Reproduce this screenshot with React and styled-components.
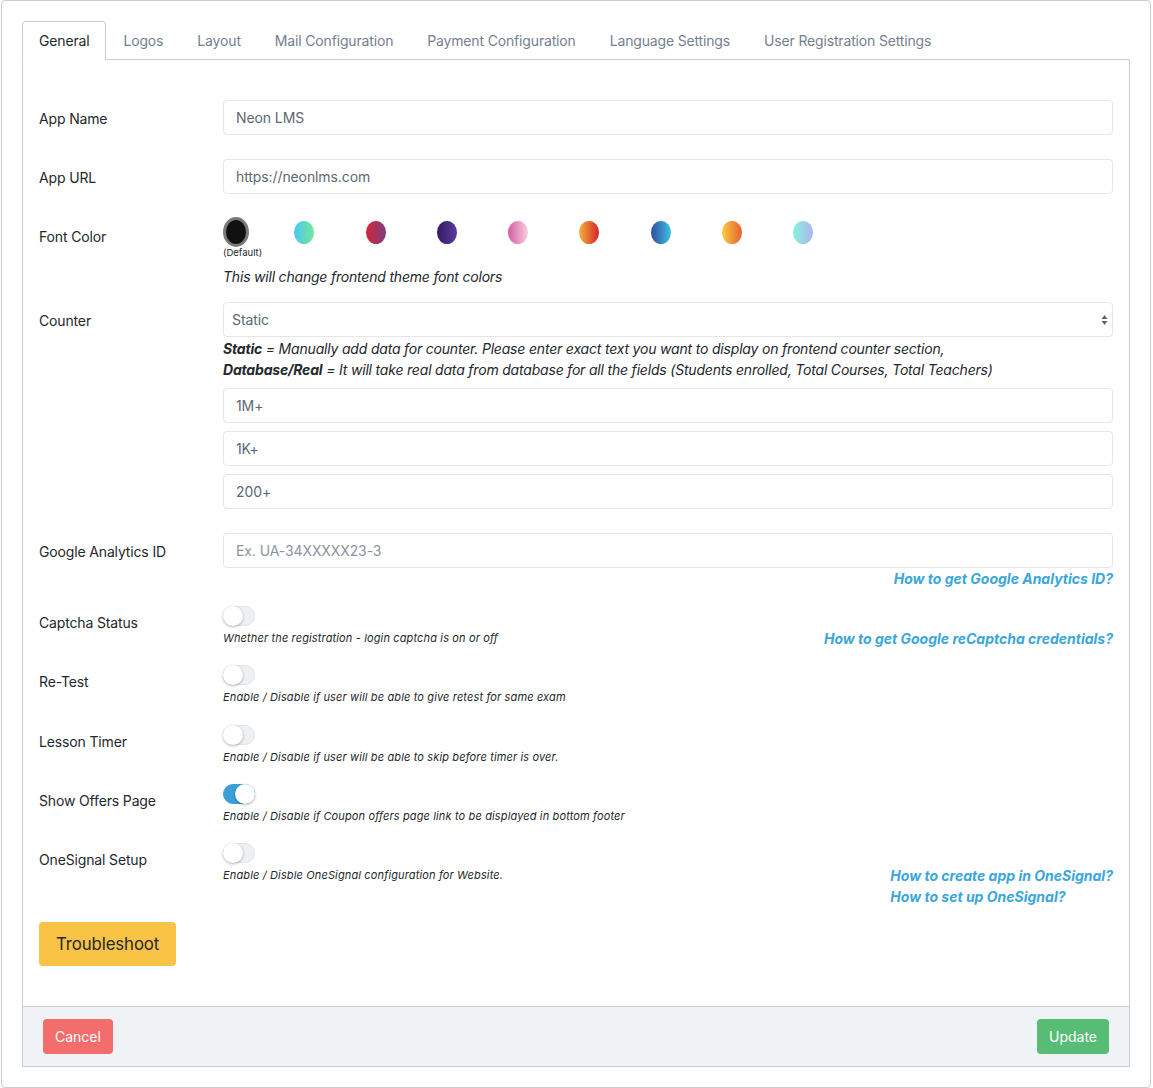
import React from 'react'
import styled, { createGlobalStyle } from 'styled-components'

const GlobalStyle = createGlobalStyle`
    * { box-sizing: border-box; }
    body {
        margin: 0;
        background: #fff;
        font-family: Inter, "Noto Sans", "Liberation Sans", sans-serif;
        font-size: 14px;
        color: #23282c;
    }
`

const tabs = ['General', 'Logos', 'Layout', 'Mail Configuration', 'Payment Configuration', 'Language Settings', 'User Registration Settings']

const swatches = [
    'linear-gradient(to right, #4cc6f2, #74e79a)',
    'linear-gradient(to right, #d2263a, #7e3d80)',
    'linear-gradient(to right, #361a62, #5a3a9e)',
    'linear-gradient(to right, #d25da0, #f7cfe0)',
    'linear-gradient(to right, #f6b23c, #d42429)',
    'linear-gradient(to right, #2f4b9e, #40c1e6)',
    'linear-gradient(to right, #f8cb44, #ea5f2e)',
    'linear-gradient(to right, #88f2dc, #acb6ee)',
]

const toggles = [
    { label: 'Captcha Status', help: 'Whether the registration - login captcha is on or off', links: ['How to get Google reCaptcha credentials?'] },
    { label: 'Re-Test', help: 'Enable / Disable if user will be able to give retest for same exam' },
    { label: 'Lesson Timer', help: 'Enable / Disable if user will be able to skip before timer is over.' },
    { label: 'Show Offers Page', help: 'Enable / Disable if Coupon offers page link to be displayed in bottom footer', on: true },
    { label: 'OneSignal Setup', help: 'Enable / Disble OneSignal configuration for Website.', links: ['How to create app in OneSignal?', 'How to set up OneSignal?'] },
]

function Toggle({ on }) {
    return (
        <Track on={on ? 1 : 0}>
            <Knob />
        </Track>
    )
}

function App() {
    return (
        <Page>
            <GlobalStyle />
            <Card>
                <Tabs>
                    {tabs.map((t, i) => (
                        <Tab key={t} active={i === 0 ? 1 : 0}>{t}</Tab>
                    ))}
                </Tabs>
                <TabContent>
                    <Pane>
                        <Row>
                            <Label>App Name</Label>
                            <Field><Input>Neon LMS</Input></Field>
                        </Row>
                        <Row>
                            <Label>App URL</Label>
                            <Field><Input>https://neonlms.com</Input></Field>
                        </Row>
                        <Row space={15}>
                            <Label>Font Color</Label>
                            <Field>
                                <Swatches>
                                    <SwatchItem>
                                        <DefaultDot />
                                        <Caption>(Default)</Caption>
                                    </SwatchItem>
                                    {swatches.map(bg => (
                                        <SwatchItem key={bg}>
                                            <Dot bg={bg} />
                                        </SwatchItem>
                                    ))}
                                </Swatches>
                                <Note>This will change frontend theme font colors</Note>
                            </Field>
                        </Row>
                        <Row>
                            <Label>Counter</Label>
                            <Field>
                                <SelectBox>
                                    Static
                                    <svg width="7" height="12" viewBox="0 0 7 12">
                                        <path d="M3.5 1 L6.5 5 L0.5 5 Z M3.5 11 L6.5 7 L0.5 7 Z" fill="#5c6873" />
                                    </svg>
                                </SelectBox>
                                <Explain>
                                    <b>Static</b> = Manually add data for counter. Please enter exact text you want to display on frontend counter section,
                                    <br />
                                    <b>Database/Real</b> = It will take real data from database for all the fields (Students enrolled, Total Courses, Total Teachers)
                                </Explain>
                                <CounterInput>1M+</CounterInput>
                                <CounterInput>1K+</CounterInput>
                                <CounterInput>200+</CounterInput>
                            </Field>
                        </Row>
                        <Row space={15}>
                            <Label>Google Analytics ID</Label>
                            <Field>
                                <Input placeholder={1}>Ex. UA-34XXXXX23-3</Input>
                                <LinkLine>
                                    <HelpLink>How to get Google Analytics ID?</HelpLink>
                                </LinkLine>
                            </Field>
                        </Row>
                        {toggles.map(t => (
                            <Row key={t.label} space={14.3}>
                                <Label>{t.label}</Label>
                                <ToggleField>
                                    <Toggle on={t.on} />
                                    <HelpLine>
                                        <Help>{t.help}</Help>
                                        {t.links && (
                                            <Links>
                                                {t.links.map(l => <HelpLink key={l}>{l}</HelpLink>)}
                                            </Links>
                                        )}
                                    </HelpLine>
                                </ToggleField>
                            </Row>
                        ))}
                        <TroubleBtn>Troubleshoot</TroubleBtn>
                    </Pane>
                    <Footer>
                        <Btn color="#f26d6c">Cancel</Btn>
                        <Btn color="#57bd76">Update</Btn>
                    </Footer>
                </TabContent>
            </Card>
        </Page>
    )
}

export default App

const Page = styled.div`
    padding: 0 2px 0 1px;
`

const Card = styled.div`
    border: 1px solid #c8ced3;
    border-radius: 4px;
    padding: 20px;
    height: 1088px;
`

const Tabs = styled.div`
    display: flex;
    margin-bottom: -1px;
`

const Tab = styled.div`
    padding: 8px 16px;
    line-height: 21px;
    font-size: 14px;
    letter-spacing: -0.16px;
    color: ${p => p.active ? '#23282c' : '#73818f'};
    background: ${p => p.active ? '#fff' : 'transparent'};
    border: 1px solid ${p => p.active ? '#c8ced3' : 'transparent'};
    border-bottom-color: ${p => p.active ? '#fff' : 'transparent'};
    border-radius: 4px 4px 0 0;
    position: relative;
    z-index: 1;
`

const TabContent = styled.div`
    border: 1px solid #c8ced3;
    background: #fff;
`

const Pane = styled.div`
    padding: 40px 16px 40px;
`

const Row = styled.div`
    display: grid;
    grid-template-columns: 184px 1fr;
    margin-bottom: ${p => p.space ?? 24}px;
`

const Label = styled.div`
    padding-top: 8px;
    line-height: 21px;
    font-size: 14px;
    letter-spacing: -0.15px;
    color: #23282c;
`

const Field = styled.div`
    min-width: 0;
`

const Input = styled.div`
    height: 35px;
    border: 1px solid #e4e7ea;
    border-radius: 4px;
    padding: 0 12px;
    display: flex;
    align-items: center;
    font-size: 14px;
    letter-spacing: -0.1px;
    color: ${p => p.placeholder ? '#8a959f' : '#5c6873'};
`

const CounterInput = styled(Input)`
    margin-top: 8px;
`

const SelectBox = styled(Input)`
    justify-content: space-between;
    padding: 0 3px 0 8px;
    svg { margin-right: 1px; }
`

const Swatches = styled.div`
    display: flex;
    margin-top: -1px;
`

const SwatchItem = styled.div`
    flex: 0 0 71.3px;
    display: flex;
    flex-direction: column;
    align-items: flex-start;
`

const DefaultDot = styled.div`
    width: 26px;
    height: 30px;
    border-radius: 50%;
    background: #111;
    border: 3px solid #7a7a7a;
`

const Dot = styled.div`
    width: 20px;
    height: 23px;
    margin-top: 4px;
    border-radius: 50%;
    background: ${p => p.bg};
`

const Caption = styled.div`
    font-size: 9.5px;
    line-height: 11px;
    color: #23282c;
`

const Note = styled.div`
    margin-top: 8px;
    font-style: italic;
    font-size: 14px;
    line-height: 21px;
    letter-spacing: -0.2px;
`

const Explain = styled.div`
    margin-top: 1px;
    font-style: italic;
    font-size: 14px;
    line-height: 21px;
    letter-spacing: -0.19px;
    color: #23282c;
    b { font-weight: 700; }
`

const LinkLine = styled.div`
    text-align: right;
    line-height: 21px;
`

const HelpLink = styled.div`
    font-style: italic;
    font-weight: 700;
    font-size: 14px;
    line-height: 21px;
    color: #3aa6dc;
`

const ToggleField = styled.div`
    padding-top: 2px;
`

const Track = styled.div`
    width: 32px;
    height: 20px;
    border-radius: 10px;
    background: ${p => p.on ? '#3a9fd6' : '#eef0f3'};
    border: 1px solid ${p => p.on ? '#3a9fd6' : '#e1e5e9'};
    display: flex;
    justify-content: ${p => p.on ? 'flex-end' : 'flex-start'};
    align-items: center;
`

const Knob = styled.div`
    width: 20px;
    height: 20px;
    margin: -1px;
    border-radius: 50%;
    background: #fff;
    box-shadow: 0 1px 3px rgba(0, 0, 0, 0.3);
`

const HelpLine = styled.div`
    margin-top: 2px;
    min-height: 21px;
    display: flex;
    justify-content: space-between;
    align-items: flex-start;
`

const Help = styled.div`
    font-style: italic;
    font-size: 11px;
    line-height: 21px;
    letter-spacing: 0.14px;
    color: #23282c;
`

const Links = styled.div`
    display: flex;
    flex-direction: column;
`

const TroubleBtn = styled.div`
    display: inline-flex;
    align-items: center;
    height: 44px;
    margin-top: 1px;
    padding: 0 17px;
    border-radius: 4px;
    background: #f9c345;
    font-size: 16.8px;
    letter-spacing: -0.1px;
    color: #23282c;
`

const Footer = styled.div`
    background: #f0f3f5;
    border-top: 1px solid #c8ced3;
    padding: 12px 20px;
    display: flex;
    justify-content: space-between;
`

const Btn = styled.div`
    height: 35px;
    padding: 0 12px;
    display: flex;
    align-items: center;
    border-radius: 4px;
    background: ${p => p.color};
    color: #fff;
    font-size: 14px;
`
